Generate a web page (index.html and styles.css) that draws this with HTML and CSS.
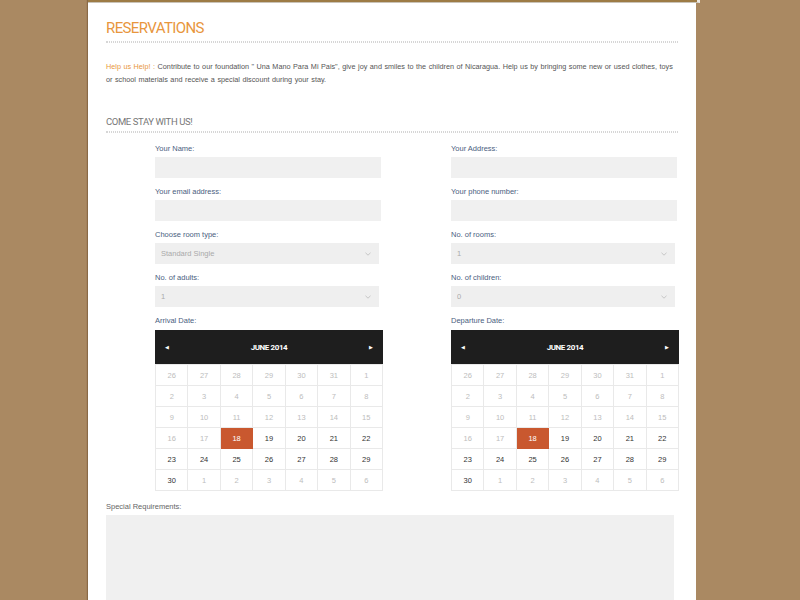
FILE: index.html
```html
<!DOCTYPE html>
<html>
<head>
<meta charset="utf-8">
<link rel="stylesheet" href="styles.css">
</head>
<body>
<div class="topbar"></div>
<main class="panel">
  <h1 class="title">RESERVATIONS</h1>
  <div class="dots"></div>
  <p class="intro"><span class="hl">Help us Help! :</span> Contribute to our foundation " Una Mano Para Mi Pais", give joy and smiles to the children of Nicaragua. Help us by bringing some new or used clothes, toys or school materials and receive a special discount during your stay.</p>
  <h2 class="subtitle">COME STAY WITH US!</h2>
  <div class="dots"></div>
  <form class="form">
    <div class="grid">
      <div class="field"><label>Your Name:</label><input class="inp" type="text"></div>
      <div class="field"><label>Your Address:</label><input class="inp" type="text"></div>
      <div class="field"><label>Your email address:</label><input class="inp" type="text"></div>
      <div class="field"><label>Your phone number:</label><input class="inp" type="text"></div>
      <div class="field"><label>Choose room type:</label><select class="sel"><option>Standard Single</option></select></div>
      <div class="field"><label>No. of rooms:</label><select class="sel"><option>1</option></select></div>
      <div class="field"><label>No. of adults:</label><select class="sel"><option>1</option></select></div>
      <div class="field"><label>No. of children:</label><select class="sel"><option>0</option></select></div>
      <div class="field"><label>Arrival Date:</label>
        <div class="cal">
          <div class="cal-head"><span class="arr">&#9664;</span><span class="month">JUNE 2014</span><span class="arr">&#9654;</span></div>
          <table class="days">
            <tr><td class="off">26</td><td class="off">27</td><td class="off">28</td><td class="off">29</td><td class="off">30</td><td class="off">31</td><td class="off">1</td></tr>
            <tr><td class="off">2</td><td class="off">3</td><td class="off">4</td><td class="off">5</td><td class="off">6</td><td class="off">7</td><td class="off">8</td></tr>
            <tr><td class="off">9</td><td class="off">10</td><td class="off">11</td><td class="off">12</td><td class="off">13</td><td class="off">14</td><td class="off">15</td></tr>
            <tr><td class="off">16</td><td class="off">17</td><td class="sel-day">18</td><td>19</td><td>20</td><td>21</td><td>22</td></tr>
            <tr><td>23</td><td>24</td><td>25</td><td>26</td><td>27</td><td>28</td><td>29</td></tr>
            <tr><td>30</td><td class="off">1</td><td class="off">2</td><td class="off">3</td><td class="off">4</td><td class="off">5</td><td class="off">6</td></tr>
          </table>
        </div>
      </div>
      <div class="field"><label>Departure Date:</label>
        <div class="cal">
          <div class="cal-head"><span class="arr">&#9664;</span><span class="month">JUNE 2014</span><span class="arr">&#9654;</span></div>
          <table class="days">
            <tr><td class="off">26</td><td class="off">27</td><td class="off">28</td><td class="off">29</td><td class="off">30</td><td class="off">31</td><td class="off">1</td></tr>
            <tr><td class="off">2</td><td class="off">3</td><td class="off">4</td><td class="off">5</td><td class="off">6</td><td class="off">7</td><td class="off">8</td></tr>
            <tr><td class="off">9</td><td class="off">10</td><td class="off">11</td><td class="off">12</td><td class="off">13</td><td class="off">14</td><td class="off">15</td></tr>
            <tr><td class="off">16</td><td class="off">17</td><td class="sel-day">18</td><td>19</td><td>20</td><td>21</td><td>22</td></tr>
            <tr><td>23</td><td>24</td><td>25</td><td>26</td><td>27</td><td>28</td><td>29</td></tr>
            <tr><td>30</td><td class="off">1</td><td class="off">2</td><td class="off">3</td><td class="off">4</td><td class="off">5</td><td class="off">6</td></tr>
          </table>
        </div>
      </div>
    </div>
    <div class="special"><label>Special Requirements:</label><textarea class="area"></textarea></div>
  </form>
</main>
</body>
</html>
```
FILE: styles.css
```css
html, body { margin: 0; padding: 0; }
body {
  background: #aa8962;
  font-family: "Liberation Sans", Arial, sans-serif;
  height: 600px;
  overflow: hidden;
}
.topbar {
  position: absolute;
  top: 0; left: 88px;
  width: 609px; height: 2px;
  background: #9d7b45;
  border-bottom: 1px solid #c9c3b8;
  border-right: 3px solid #eeeae4;
  z-index: 2;
}
.panel {
  margin-left: 88px;
  width: 608px;
  box-sizing: border-box;
  background: #fff;
  min-height: 600px;
  padding: 19px 18px 0 18px;
  box-shadow: -1px 0 1px rgba(80,50,20,0.35);
}
.title {
  margin: 0;
  font-family: Roboto, "Liberation Sans", sans-serif;
  font-weight: 400;
  font-size: 15px;
  line-height: 18px;
  letter-spacing: -0.6px;
  color: #e8963d;
}
.dots {
  height: 0;
  border-top: 1px dotted #d6d6d6;
  border-bottom: 1px dotted #d6d6d6;
  margin-top: 4px;
}
.intro {
  margin: 17px 0 0 0;
  padding-right: 4px;
  font-size: 7.25px;
  line-height: 13px;
  word-spacing: 0.5px;
  color: #555;
}
.hl { color: #e8963d; }
.subtitle {
  margin: 30px 0 0 0;
  font-family: Roboto, "Liberation Sans", sans-serif;
  font-weight: 400;
  font-size: 9.5px;
  line-height: 12px;
  letter-spacing: -0.4px;
  color: #777;
}
.subtitle + .dots { margin-top: 3px; }
.form { margin-top: 11px; }
.grid {
  display: grid;
  grid-template-columns: 228px 228px;
  column-gap: 68px;
  margin-left: 49px;
}
.field { margin-bottom: 9px; }
label {
  display: block;
  font-size: 7.5px;
  line-height: 10px;
  color: #4a6080;
  margin-bottom: 3px;
}
.inp {
  display: block;
  width: 226px;
  height: 21px;
  box-sizing: border-box;
  border: none;
  background: #f0f0f0;
  margin: 0;
  padding: 0 6px;
}
.sel {
  display: block;
  -webkit-appearance: none;
  appearance: none;
  width: 224px;
  height: 21px;
  box-sizing: border-box;
  border: none;
  border-radius: 0;
  margin: 0;
  padding: 0 6px;
  font-family: "Liberation Sans", Arial, sans-serif;
  font-size: 7.5px;
  color: #aaa;
  background: #efefef url("data:image/svg+xml;utf8,<svg xmlns='http://www.w3.org/2000/svg' width='6' height='4' viewBox='0 0 6 4'><path d='M0.5 0.8 L3 3.2 L5.5 0.8' fill='none' stroke='%23bbb' stroke-width='0.8'/></svg>") no-repeat right 8px center;
}
.cal { margin-top: 4px; width: 228px; }
.cal-head {
  height: 34px;
  background: #1e1e1e;
  display: flex;
  align-items: center;
  justify-content: space-between;
  padding: 0 10px;
  color: #fff;
}
.arr { font-size: 5px; line-height: 1; }
.month {
  font-family: Roboto, "Liberation Sans", sans-serif;
  font-weight: 700;
  font-size: 8px;
  letter-spacing: -0.4px;
}
.days {
  width: 228px;
  border-collapse: collapse;
  table-layout: fixed;
}
.days td {
  height: 21px;
  padding: 0;
  box-sizing: border-box;
  border: 1px solid #e9e9e9;
  text-align: center;
  font-size: 7.5px;
  color: #333;
}
.days td.off { color: #bdbdbd; }
.days td.sel-day { background: #c9582f; color: #fff; border-color: #c9582f; }
.special { margin-top: 2px; }
.special label { color: #666; }
.area {
  display: block;
  width: 568px;
  height: 110px;
  box-sizing: border-box;
  border: none;
  background: #f0f0f0;
  resize: none;
  margin: 0;
}
```
